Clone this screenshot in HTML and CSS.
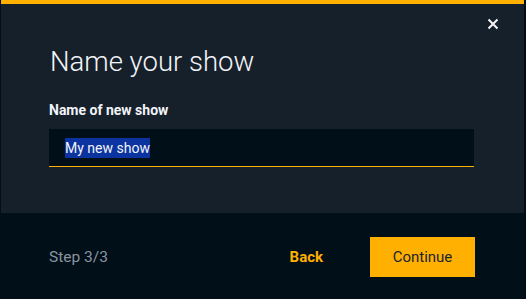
FILE: index.html
```html
<!DOCTYPE html>
<html lang="en">
<head>
    <meta charset="UTF-8">
    <title>Name your show</title>
    <link rel="stylesheet" href="styles.css">
</head>
<body>
    <div class="modal">
        <div class="accent"></div>

        <div class="modal-body">
            <div class="close-row">
                <button class="close" aria-label="Close">
                    <svg width="12" height="12" viewBox="0 0 12 12">
                        <path d="M1.5 1.5 L10.5 10.5 M10.5 1.5 L1.5 10.5" stroke="#f2f4f8" stroke-width="2" fill="none"/>
                    </svg>
                </button>
            </div>
            <h1>Name your show</h1>
            <label class="field-label" for="showName">Name of new show</label>
            <div class="field">
                <span class="field-text"><span class="selected">My new show</span></span>
            </div>
        </div>

        <div class="modal-footer">
            <span class="step">Step 3/3</span>
            <button class="btn-back">Back</button>
            <button class="btn-continue">Continue</button>
        </div>
    </div>
</body>
</html>
```

FILE: styles.css
```css
body {
    margin: 0;
    background-color: #000e18;
    font-family: 'Roboto', 'Inter', sans-serif;
}

.modal {
    display: flex;
    flex-direction: column;
    height: 299px;
    margin-left: 1px;
    margin-right: 2px;
    background-color: #16202b;
}

.accent {
    height: 4px;
    background-color: #ffb000;
}

.modal-body {
    flex: 1;
    padding: 12px 23px 0 48px;
}

.close-row {
    display: flex;
    justify-content: flex-end;
}

.close {
    width: 16px;
    height: 16px;
    padding: 2px;
    border: none;
    background: none;
    cursor: pointer;
}

h1 {
    margin: 12px 0 0 1px;
    font-size: 27.5px;
    font-weight: 300;
    color: #f2f4f8;
    line-height: 36px;
}

.field-label {
    display: block;
    margin-top: 22px;
    font-size: 14px;
    font-weight: 700;
    color: #f2f4f8;
}

.field {
    display: flex;
    align-items: center;
    height: 38px;
    width: 425px;
    margin-top: 11px;
    padding-left: 16px;
    box-sizing: border-box;
    background-color: #010f19;
    border-bottom: 1px solid #ffb000;
}

.field-text {
    font-size: 14px;
    color: #f2f4f8;
}

.selected {
    background-color: #0b34a0;
    padding: 2px 0;
}

.modal-footer {
    display: flex;
    align-items: center;
    height: 86px;
    padding-left: 48px;
    padding-top: 2px;
    box-sizing: border-box;
    background-color: #010f19;
}

.step {
    flex: 1;
    font-size: 15.5px;
    color: #8b95a0;
}

.btn-back {
    margin-right: 47px;
    padding: 0;
    border: none;
    background: none;
    color: #ffb000;
    font-family: inherit;
    font-size: 15px;
    font-weight: 700;
    cursor: pointer;
}

.btn-continue {
    width: 105px;
    height: 40px;
    margin-right: 49px;
    border: none;
    background-color: #ffb000;
    color: #1b2530;
    font-family: inherit;
    font-size: 15px;
    cursor: pointer;
}
```
